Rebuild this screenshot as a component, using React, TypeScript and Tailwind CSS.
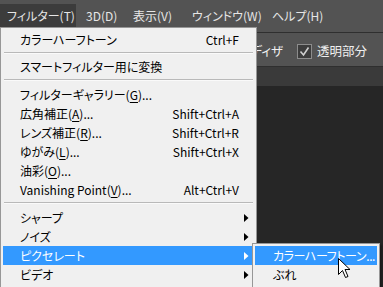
import React from "react";

const font = { fontFamily: '"Noto Sans CJK JP", "Noto Sans", sans-serif', fontFeatureSettings: '"palt"' } as React.CSSProperties;

function Arrow({ white }: { white?: boolean }) {
  return (
    <svg className="absolute right-[5px] top-[6px]" width="5" height="8" viewBox="0 0 5 8">
      <path d="M0 0 L4.5 4 L0 8 Z" fill={white ? "#ffffff" : "#000000"} />
    </svg>
  );
}

function Item({ label, shortcut, sub, active }: { label: React.ReactNode; shortcut?: string; sub?: boolean; active?: boolean }) {
  return (
    <div className={`relative mx-[2px] flex h-[19px] items-center whitespace-nowrap pl-[17px] pr-[15px] ${active ? "bg-[#3399ff] text-white" : "text-black"}`}>
      <span>{label}</span>
      {shortcut && <span className="ml-auto">{shortcut}</span>}
      {sub && <Arrow white={active} />}
    </div>
  );
}

function Sep({ h }: { h: number }) {
  return (
    <div className={`mx-[3px] flex flex-col ${h === 8 ? "h-[8px] pt-[3px]" : "h-[9px] pt-[3px]"}`}>
      <div className="h-px bg-[#b9b9b9]" />
      <div className="h-px bg-[#fafafa]" />
    </div>
  );
}

const U = ({ c }: { c: string }) => <span className="underline underline-offset-[2px]">{c}</span>;

export default function App() {
  return (
    <div className="relative h-[287px] w-[383px] overflow-hidden bg-[#262626] text-[12px] leading-none" style={font}>
      {/* menubar */}
      <div className="flex h-[32px] whitespace-nowrap bg-[#535353] pt-[4px] text-[12px] text-[#e6e6e6]">
        <div className="flex h-[28px] w-[76px] shrink-0 items-start bg-[#3c3c3c] pl-[7px] pt-[6px]">フィルター(T)</div>
        <div className="w-[50px] shrink-0 pl-[10px] pt-[6px]">3D(D)</div>
        <div className="w-[59px] shrink-0 pl-[7px] pt-[6px]">表示(V)</div>
        <div className="w-[80px] shrink-0 pl-[7px] pt-[6px]">ウィンドウ(W)</div>
        <div className="shrink-0 pl-[7px] pt-[6px]">ヘルプ(H)</div>
      </div>
      <div className="h-px bg-[#2f2f2f]" />
      {/* options bar */}
      <div className="flex h-[33px] items-center justify-end gap-[5px] whitespace-nowrap bg-[#535353] pr-[16px] pt-[3px] text-[12.5px] text-[#f0f0f0]">
        <span className="mr-[9px]">ディザ</span>
        <div className="flex h-[15px] w-[15px] items-center justify-center border border-[#8c8c8c] bg-[#3c3c3c]">
          <svg width="11" height="11" viewBox="0 0 11 11">
            <path d="M1.5 5.5 L4.5 9 L9.5 1.5" fill="none" stroke="#cfcfcf" strokeWidth="1.6" />
          </svg>
        </div>
        <span>透明部分</span>
      </div>
      <div className="h-px bg-[#2f2f2f]" />
      <div className="h-[19px] bg-[#3a3a3a]" />

      {/* dropdown menu */}
      <div className="absolute left-0 top-[27px] w-[257px] border border-[#979797] bg-[#f0f0f0] pt-[2px] text-[12px]">
        <Item label="カラーハーフトーン" shortcut="Ctrl+F" />
        <Sep h={8} />
        <Item label="スマートフィルター用に変換" />
        <Sep h={9} />
        <Item label={<>フィルターギャラリー(<U c="G" />)...</>} />
        <Item label={<>広角補正(<U c="A" />)...</>} shortcut="Shift+Ctrl+A" />
        <Item label={<>レンズ補正(<U c="R" />)...</>} shortcut="Shift+Ctrl+R" />
        <Item label={<>ゆがみ(<U c="L" />)...</>} shortcut="Shift+Ctrl+X" />
        <Item label={<>油彩(<U c="O" />)...</>} />
        <Item label={<>Vanishing Point(<U c="V" />)...</>} shortcut="Alt+Ctrl+V" />
        <Sep h={9} />
        <Item label="シャープ" sub />
        <Item label="ノイズ" sub />
        <Item label="ピクセレート" sub active />
        <Item label="ビデオ" sub />
        <div className="h-[20px]" />
      </div>

      {/* submenu */}
      <div className="absolute left-[252px] top-[243px] w-[128px] border border-[#979797] bg-[#f0f0f0] pt-[2px] text-[12px] shadow-[2px_2px_2px_rgba(0,0,0,0.35)]">
        <div className="mx-[2px] flex h-[19px] items-center whitespace-nowrap bg-[#3399ff] pl-[18px] tracking-[-0.4px] text-white">カラーハーフトーン...</div>
        <div className="mx-[2px] flex h-[19px] items-center whitespace-nowrap pl-[18px] text-black">ぶれ</div>
        <div className="h-[10px]" />
      </div>

      {/* cursor */}
      <svg className="absolute left-[338px] top-[258px]" width="14" height="22" viewBox="0 0 14 22">
        <path d="M0.5 0.5 L0.5 16.5 L4.5 12.5 L7.5 19.5 L10 18.5 L7 11.5 L12 11.5 Z" fill="#ffffff" stroke="#000000" strokeWidth="1" strokeLinejoin="miter" />
      </svg>
    </div>
  );
}
